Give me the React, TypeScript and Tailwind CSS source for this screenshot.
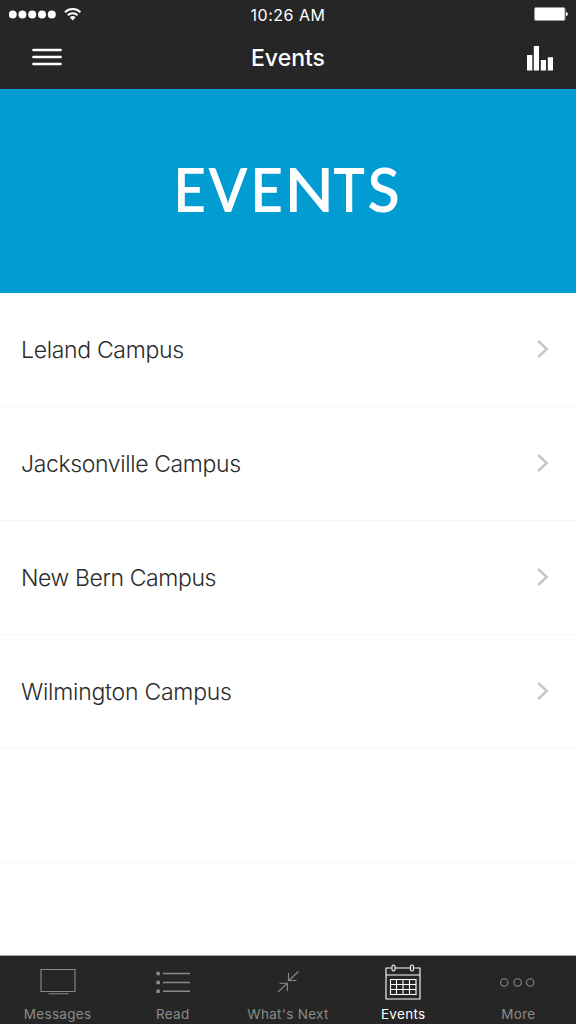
import type { ReactNode } from "react";
import clsx from "clsx";

const campuses = [
  { name: "Leland Campus", tracking: "tracking-[-0.32px]" },
  { name: "Jacksonville Campus", tracking: "tracking-[-0.37px]" },
  { name: "New Bern Campus", tracking: "tracking-[-0.4px]" },
  { name: "Wilmington Campus", tracking: "tracking-[-0.24px]" },
];

const bannerLetters = [
  { char: "E", box: "w-[31px]", scale: "scale-x-[0.93]" },
  { char: "V", box: "w-[44px]", scale: "scale-x-[0.93]" },
  { char: "E", box: "w-[35px]", scale: "scale-x-[0.93]" },
  { char: "N", box: "w-[49px]", scale: "scale-x-[1.06]" },
  { char: "T", box: "w-[32px]", scale: "scale-x-[0.87]" },
  { char: "S", box: "w-[36px]", scale: "scale-x-[0.97]" },
];

const StatusBar = () => (
  <div className="grid h-[30px] grid-cols-3 items-center text-white">
    <div className="flex items-center pl-[9px]">
      <svg width="74" height="16" viewBox="0 0 74 16" fill="currentColor">
        <circle cx="3.7" cy="7.6" r="4" />
        <circle cx="13.4" cy="7.6" r="4" />
        <circle cx="23.2" cy="7.6" r="4" />
        <circle cx="33" cy="7.6" r="4" />
        <circle cx="42.8" cy="7.6" r="4" />
        <g fill="none" stroke="currentColor" strokeWidth="2.1">
          <path d="M56 5.2a11 11 0 0 1 15.4 0" />
          <path d="M58.8 8.3a7 7 0 0 1 9.8 0" />
        </g>
        <path d="M60.8 10.3a4.2 4.2 0 0 1 5.8 0l-2.9 3.2z" />
      </svg>
    </div>
    <div className="text-center text-[16px] leading-none tracking-[0.5px]">
      10:26 AM
    </div>
    <div className="flex items-center justify-end pr-2">
      <svg className="mb-[2px]" width="34" height="14" viewBox="0 0 34 14">
        <rect x="0.5" y="0.5" width="30.5" height="13" rx="1.5" fill="#fff" stroke="#999" />
        <path d="M32 5c2.4 0 2.4 4 0 4z" fill="#fff" />
      </svg>
    </div>
  </div>
);

const NavBar = () => (
  <div className="grid h-[56px] grid-cols-3 items-center text-white">
    <button className="ml-8 h-[18px] w-[30px]" aria-label="Menu">
      <svg
        className="-mt-[2px] block"
        width="30"
        height="18"
        stroke="currentColor"
        strokeWidth="2.7"
        strokeLinecap="round"
      >
        <path d="M1.5 2h27M1.5 9h27M1.5 16h27" />
      </svg>
    </button>
    <h1 className="pt-px text-center text-[23px] font-medium leading-none">Events</h1>
    <button className="mr-[22px] justify-self-end" aria-label="Now playing">
      <svg className="block" width="28" height="26" viewBox="0 0 28 26" fill="currentColor">
        <path d="M1 10h5.3v15.5H1zM7.8 1H13v24.5H7.8zM14.8 15H20v10.5h-5.2zM21.8 12.3H27v13.2h-5.2z" />
      </svg>
    </button>
  </div>
);

const Banner = () => (
  <div className="flex h-[204px] shrink-0 items-center justify-center bg-[#009cd2] pb-[6px] font-['Lato',sans-serif] text-[61px] font-semibold leading-none text-white">
    {bannerLetters.map(({ char, box, scale }, i) => (
      <span key={i} className={clsx("flex justify-center", box)}>
        <span className={scale}>{char}</span>
      </span>
    ))}
  </div>
);

const Row = ({ name, tracking }: { name: string; tracking: string }) => (
  <li className="flex h-[114px] items-center justify-between border-b border-[#f7f7f7] pl-[21px] pr-[27px]">
    <span className={clsx("pt-px text-[23px] font-light leading-none text-[#2b2b2b]", tracking)}>
      {name}
    </span>
    <svg
      className="mb-[2px] block"
      width="12"
      height="18"
      fill="none"
      stroke="#c5c5c8"
      strokeWidth="2.4"
      viewBox="0 0 12 18"
    >
      <path d="M1.2 1l8.6 8-8.6 8" />
    </svg>
  </li>
);

const Tab = ({
  label,
  active,
  children,
}: {
  label: string;
  active?: boolean;
  children: ReactNode;
}) => (
  <button
    className={clsx(
      "flex flex-1 basis-0 flex-col items-center pt-2",
      active ? "text-white" : "text-[#8a8a8a]"
    )}
  >
    <svg
      width="38"
      height="38"
      viewBox="0 0 38 38"
      fill="none"
      stroke="currentColor"
      strokeWidth="1.1"
    >
      {children}
    </svg>
    <span className="mt-1 text-[13.5px] leading-[17px] tracking-[0.3px]">{label}</span>
  </button>
);

export default function App() {
  return (
    <div className="flex h-[1024px] w-[576px] flex-col overflow-hidden bg-white font-['Inter',sans-serif]">
      <header className="h-[89px] shrink-0 bg-[#262626]">
        <StatusBar />
        <NavBar />
      </header>

      <Banner />

      <ul className="flex-1">
        {campuses.map((campus) => (
          <Row key={campus.name} {...campus} />
        ))}
        <li className="h-[114px] border-b border-[#f7f7f7]" />
      </ul>

      <nav className="flex h-[69px] shrink-0 border-t border-[#a5abaa] bg-[#262626]">
        <Tab label="Messages">
          <path d="M2 5.5h34v22H2zM9.5 29.8h20" />
        </Tab>
        <Tab label="Read">
          <path d="M9 9.5h27M9 18.5h27M9 27.3h27" strokeWidth="1.4" />
          <path d="M2.4 9.5h3.5M2.4 18.5h3.5M2.4 27.3h3.5" strokeWidth="3.5" />
        </Tab>
        <Tab label="What's Next">
          <path d="M29.5 7.5l-9.7 9M19.5 9v7.5h8M9 28l9.2-8.7M10.5 19.2h7.9V27" />
        </Tab>
        <Tab label="Events" active>
          <path d="M7.5 4H2v31h34V4h-5.5M11 4h15.5M2 11h34" />
          <rect x="8" y="1" width="3" height="6" rx="1.5" />
          <rect x="26.5" y="1" width="3" height="6" rx="1.5" />
          <path d="M6.5 15.5h25.5v15H6.5zM6.5 20.5H32M6.5 25.5H32M12.5 15.5v15M19 15.5v15M25.5 15.5v15" />
        </Tab>
        <Tab label="More">
          <circle cx="5.3" cy="18.5" r="3.7" />
          <circle cx="18.6" cy="18.5" r="3.7" />
          <circle cx="31.2" cy="18.5" r="3.7" />
        </Tab>
      </nav>
    </div>
  );
}
